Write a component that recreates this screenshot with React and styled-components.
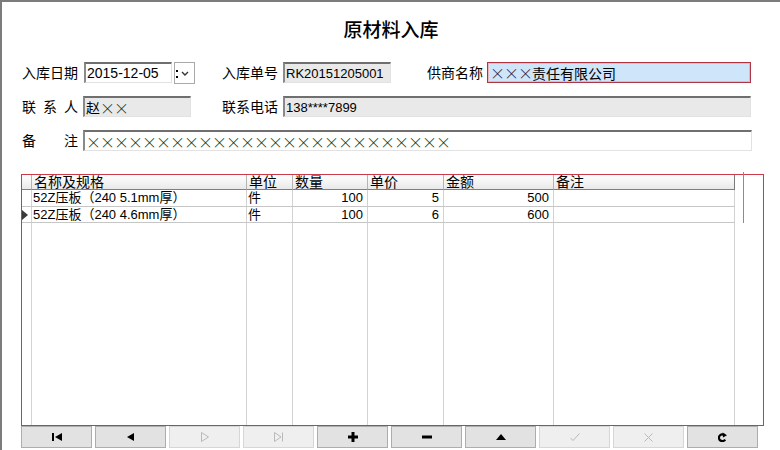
import React from "react";
import styled, { createGlobalStyle } from "styled-components";

const GlobalStyle = createGlobalStyle`
  html, body {
    margin: 0;
    padding: 0;
    background: #fff;
  }
  body {
    font-family: "Noto Sans CJK SC", "Liberation Sans", sans-serif;
    color: #000;
  }
`;

const Window = styled.div`
  width: 780px;
  height: 450px;
  box-sizing: border-box;
  border-top: 2px solid #7c7c7c;
  border-left: 2px solid #7c7c7c;
  background: #fff;
  display: flex;
  flex-direction: column;
  overflow: hidden;
`;

const Title = styled.h1`
  margin: 0;
  padding-top: 15px;
  font-size: 19px;
  line-height: 24px;
  font-weight: 500;
  text-align: center;
`;

const Form = styled.div`
  display: flex;
  flex-direction: column;
  gap: 13px;
  margin-top: 21px;
  padding-left: 20px;
`;

const Row = styled.div`
  display: flex;
  align-items: center;
  height: 21px;
`;

const LabelBox = styled.div`
  width: ${(p) => p.w || 56}px;
  margin-left: ${(p) => p.ml || 0}px;
  margin-right: ${(p) => p.mr || 5}px;
  display: flex;
  justify-content: space-between;
  font-size: 14px;
  line-height: 21px;
  white-space: nowrap;
`;

const Label = ({ text, ...props }) => (
  <LabelBox {...props}>
    {text.split("").map((c, i) => (
      <span key={i}>{c}</span>
    ))}
  </LabelBox>
);

const bgs = {
  white: "#ffffff",
  gray: "#e9e9e9",
  blue: "#cfe5fa",
};

const Field = styled.div`
  width: ${(p) => p.w}px;
  height: 21px;
  box-sizing: border-box;
  background: ${(p) => bgs[p.tone || "white"]};
  border-top: 2px solid #6f6f6f;
  border-left: 2px solid #8a8a8a;
  border-right: 1px solid #e2e2e2;
  border-bottom: 1px solid #e2e2e2;
  padding-left: 1px;
  display: flex;
  align-items: center;
  font-family: "Liberation Sans", "Noto Sans CJK SC", sans-serif;
  font-size: ${(p) => p.fs || 14}px;
  white-space: nowrap;
  overflow: hidden;

  &.active {
    border: 1px solid #b03442;
    box-shadow: inset 0 0 0 1px #e6b8be;
    padding-left: 2px;
  }
`;

const Cross = styled.span`
  display: inline-block;
  width: 14px;
  text-align: center;
  font-family: "Noto Sans CJK SC", sans-serif;
  font-size: 15px;
  line-height: 1;
  font-weight: 300;
  color: #222;
`;

const withCross = (str) =>
  str.split("").map((c, i) => (c === "×" ? <Cross key={i}>×</Cross> : c));

const DropButton = styled.div`
  width: 21px;
  height: 22px;
  box-sizing: border-box;
  margin-left: 2px;
  margin-right: 27px;
  border: 1px solid #a9a9a9;
  background: #fff;
  display: flex;
  align-items: center;
`;

const Grid = styled.div`
  margin: 23px 0 0 19px;
  width: 743px;
  height: 252px;
  box-sizing: border-box;
  border: 1px solid #cc3a4a;
  display: grid;
  grid-template-columns: 10px 215px 46px 75px 76px 110px 181px 1fr;
  grid-template-rows: 15px 17px 16px 1fr;
  font-family: "Liberation Sans", "Noto Sans CJK SC", sans-serif;
`;

const HeadCell = styled.div`
  background: linear-gradient(#ffffff, #e9e9e9);
  border-right: 1px solid ${(p) => (p.last ? "#7a7a7a" : "#b4b4b4")};
  border-bottom: 1px solid #7f7f7f;
  font-family: "Noto Sans CJK SC", sans-serif;
  font-size: 14px;
  line-height: 13px;
  padding-left: 2px;
  white-space: nowrap;
`;

const Cell = styled.div`
  border-right: 1px solid #d2d2d2;
  border-bottom: ${(p) => (p.filler ? "none" : "1px solid #c6c6c6")};
  font-size: 13px;
  line-height: 16px;
  padding: 0 4px 0 1px;
  white-space: nowrap;
  overflow: hidden;
  display: flex;
  align-items: center;
  justify-content: ${(p) => (p.right ? "flex-end" : "flex-start")};
`;

const IndicatorCell = styled(Cell)`
  padding: 0;
`;

const Gutter = styled.div`
  grid-column: 8;
  grid-row: 1 / span 3;
  margin-left: 8px;
  margin-top: -3px;
  width: 1px;
  background: #8c8c8c;
`;

const ButtonBar = styled.div`
  display: flex;
  gap: 3px;
  margin-left: 19px;
`;

const NavButton = styled.div`
  width: 71px;
  height: 22px;
  box-sizing: border-box;
  border: 1px solid ${(p) => (p.disabled ? "#d6d6d6" : "#adadad")};
  background: ${(p) => (p.disabled ? "#efefef" : "#e2e2e2")};
  display: flex;
  align-items: center;
  justify-content: center;
  color: ${(p) => (p.disabled ? "#b9b9b9" : "#000")};
`;

const columns = ["名称及规格", "单位", "数量", "单价", "金额", "备注"];

const rows = [
  { name: "52Z压板（240 5.1mm厚）", unit: "件", qty: 100, price: 5, amount: 500 },
  { name: "52Z压板（240 4.6mm厚）", unit: "件", qty: 100, price: 6, amount: 600, current: true },
];

const Icon = {
  first: (
    <svg width="10" height="8" viewBox="0 0 10 8">
      <rect x="0" y="0" width="2" height="8" fill="currentColor" />
      <polygon points="10,0 10,8 3,4" fill="currentColor" />
    </svg>
  ),
  prev: (
    <svg width="7" height="8" viewBox="0 0 7 8">
      <polygon points="7,0 7,8 0,4" fill="currentColor" />
    </svg>
  ),
  next: (
    <svg width="8" height="10" viewBox="0 0 8 10">
      <polygon points="0.5,0.5 0.5,9.5 7.5,5 " fill="none" stroke="currentColor" strokeWidth="1" />
    </svg>
  ),
  last: (
    <svg width="10" height="10" viewBox="0 0 10 10">
      <polygon points="0.5,0.5 0.5,9.5 7,5" fill="none" stroke="currentColor" strokeWidth="1" />
      <line x1="8.5" y1="0.5" x2="8.5" y2="9.5" stroke="currentColor" strokeWidth="1" />
    </svg>
  ),
  add: (
    <svg width="10" height="10" viewBox="0 0 10 10">
      <rect x="3.5" y="0" width="3" height="10" fill="currentColor" />
      <rect x="0" y="3.5" width="10" height="3" fill="currentColor" />
    </svg>
  ),
  remove: (
    <svg width="10" height="4" viewBox="0 0 10 4">
      <rect x="0" y="0.5" width="10" height="3" fill="currentColor" />
    </svg>
  ),
  up: (
    <svg width="10" height="6" viewBox="0 0 10 6">
      <polygon points="0,6 10,6 5,0" fill="currentColor" />
    </svg>
  ),
  save: (
    <svg width="10" height="8" viewBox="0 0 10 8">
      <polyline points="0.5,5 3,7.5 9.5,0.5" fill="none" stroke="currentColor" strokeWidth="1" />
    </svg>
  ),
  cancel: (
    <svg width="9" height="9" viewBox="0 0 9 9">
      <path d="M0.5 0.5 L8.5 8.5 M8.5 0.5 L0.5 8.5" stroke="currentColor" strokeWidth="1" />
    </svg>
  ),
  refresh: (
    <svg width="9" height="10" viewBox="0 0 9 10">
      <path d="M6.6 3.2 A3.4 3.4 0 1 0 7.2 7.6" fill="none" stroke="currentColor" strokeWidth="2.2" />
      <polygon points="4.6,0.4 9,3.2 5,5.6" fill="currentColor" />
    </svg>
  ),
};

const buttons = [
  { icon: "first" },
  { icon: "prev" },
  { icon: "next", disabled: true },
  { icon: "last", disabled: true },
  { icon: "add" },
  { icon: "remove" },
  { icon: "up" },
  { icon: "save", disabled: true },
  { icon: "cancel", disabled: true },
  { icon: "refresh" },
];

const Marker = () => (
  <svg width="7" height="10" viewBox="0 0 7 10" style={{ flexShrink: 0 }}>
    <polygon points="0,0 6,5 0,10" fill="#3a3a3a" />
  </svg>
);

const App = () => {
  return (
    <>
      <GlobalStyle />
      <Window>
        <Title>原材料入库</Title>

        <Form>
          <Row>
            <Label text="入库日期" mr={6} />
            <Field w={88}>2015-12-05</Field>
            <DropButton>
              <svg width="19" height="20" viewBox="0 0 19 20">
                <rect x="1" y="7" width="2" height="2" fill="#000" />
                <rect x="1" y="13" width="2" height="2" fill="#000" />
                <polyline points="7,9 10,12 13,9" fill="none" stroke="#333" strokeWidth="1.4" />
              </svg>
            </DropButton>
            <Label text="入库单号" />
            <Field w={108} tone="gray" fs={13}>RK20151205001</Field>
            <Label text="供商名称" ml={36} mr={4} />
            <Field w={264} tone="blue" className="active">
              {withCross("×××责任有限公司")}
            </Field>
          </Row>

          <Row>
            <Label text="联系人" />
            <Field w={108} tone="gray">{withCross("赵××")}</Field>
            <Label text="联系电话" ml={31} />
            <Field w={468} tone="gray" fs={13}>138****7899</Field>
          </Row>

          <Row>
            <Label text="备注" />
            <Field w={669}>{withCross("×".repeat(26))}</Field>
          </Row>
        </Form>

        <Grid>
          <HeadCell />
          {columns.map((c, i) => (
            <HeadCell key={c} last={i === columns.length - 1}>
              {c}
            </HeadCell>
          ))}
          <Gutter />

          {rows.map((r, i) => (
            <React.Fragment key={i}>
              <IndicatorCell>{r.current && <Marker />}</IndicatorCell>
              <Cell>{r.name}</Cell>
              <Cell>{r.unit}</Cell>
              <Cell right>{r.qty}</Cell>
              <Cell right>{r.price}</Cell>
              <Cell right>{r.amount}</Cell>
              <Cell />
            </React.Fragment>
          ))}

          {Array.from({ length: 7 }).map((_, i) => (
            <Cell key={i} filler style={{ gridRow: 4, gridColumn: i + 1 }} />
          ))}
        </Grid>

        <ButtonBar>
          {buttons.map((b) => (
            <NavButton key={b.icon} disabled={b.disabled}>
              {Icon[b.icon]}
            </NavButton>
          ))}
        </ButtonBar>
      </Window>
    </>
  );
};

export default App;
